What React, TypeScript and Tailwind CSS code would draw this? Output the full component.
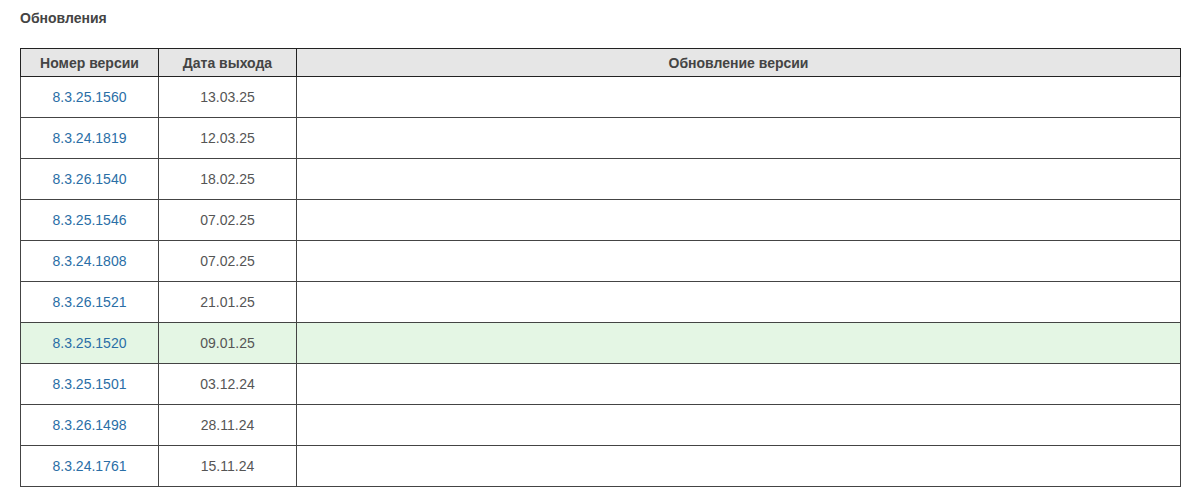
import React from 'react';

const rows = [
  { v: '8.3.25.1560', d: '13.03.25' },
  { v: '8.3.24.1819', d: '12.03.25' },
  { v: '8.3.26.1540', d: '18.02.25' },
  { v: '8.3.25.1546', d: '07.02.25' },
  { v: '8.3.24.1808', d: '07.02.25' },
  { v: '8.3.26.1521', d: '21.01.25' },
  { v: '8.3.25.1520', d: '09.01.25', hl: true },
  { v: '8.3.25.1501', d: '03.12.24' },
  { v: '8.3.26.1498', d: '28.11.24' },
  { v: '8.3.24.1761', d: '15.11.24' },
];

export default function App() {
  return (
    <div className="bg-white min-h-screen px-5 pt-[10px] font-['Liberation_Sans',Arial,sans-serif] text-[#444]">
      <h2 className="text-[14px] font-bold leading-[16px] text-[#444]">Обновления</h2>
      <table className="mt-[22px] w-[1161px] border-collapse table-fixed">
        <colgroup>
          <col className="w-[138px]" />
          <col className="w-[138px]" />
          <col />
        </colgroup>
        <thead>
          <tr className="bg-[#e6e6e6] h-[28px]">
            <th className="border border-[#222] text-[14px] leading-[16px] font-bold text-[#444] text-center">Номер версии</th>
            <th className="border border-[#222] text-[14px] leading-[16px] font-bold text-[#444] text-center">Дата выхода</th>
            <th className="border border-[#222] text-[14px] leading-[16px] font-bold text-[#444] text-center">Обновление версии</th>
          </tr>
        </thead>
        <tbody>
          {rows.map((r) => (
            <tr key={r.v} className={r.hl ? 'bg-[#e4f6e4] h-[41px]' : 'h-[41px]'}>
              <td className="border border-[#444] text-center text-[14px]">
                <a href="#" className="text-[#2a6ea6]">{r.v}</a>
              </td>
              <td className="border border-[#444] text-center text-[14px] text-[#555]">{r.d}</td>
              <td className="border border-[#444]"></td>
            </tr>
          ))}
        </tbody>
      </table>
    </div>
  );
}
